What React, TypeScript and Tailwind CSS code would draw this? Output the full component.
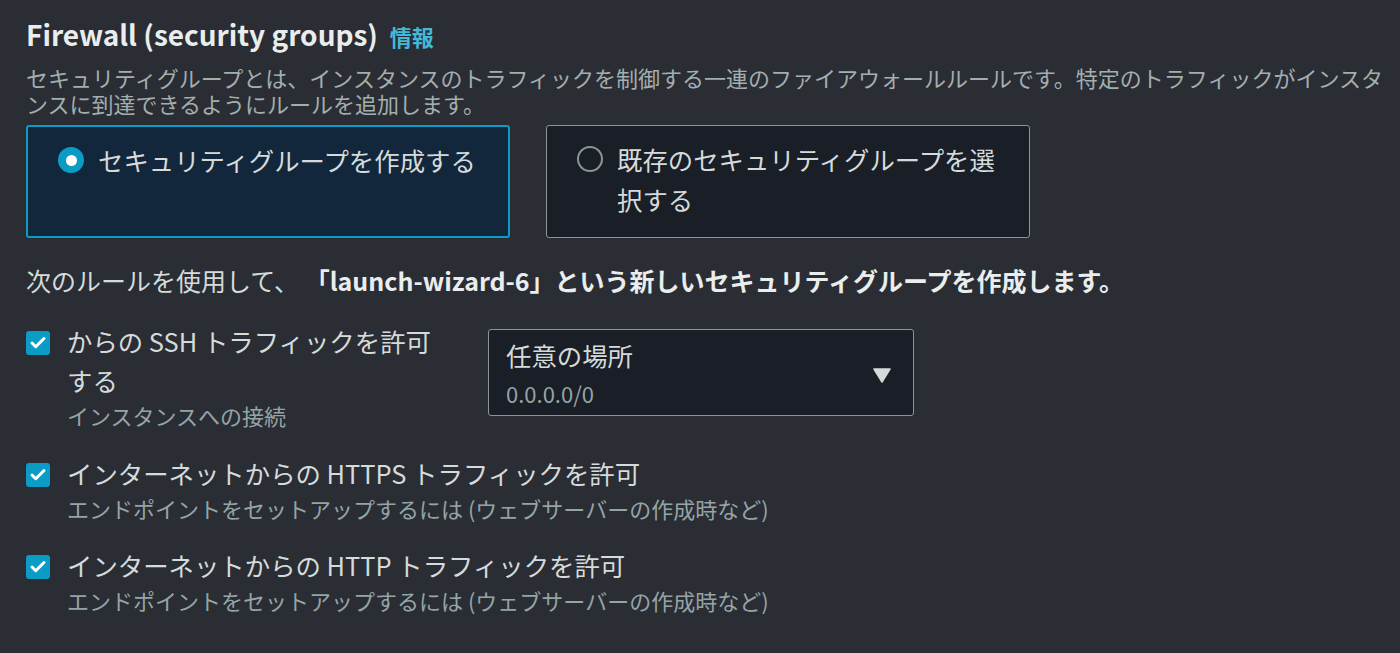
import { Check } from "lucide-react";

const font = { fontFamily: '"Noto Sans CJK JP", "Noto Sans", sans-serif' };

const rules = [
  {
    id: "ssh",
    label: "からの SSH トラフィックを許可する",
    hint: "インスタンスへの接続",
    withSource: true,
  },
  {
    id: "https",
    label: "インターネットからの HTTPS トラフィックを許可",
    hint: "エンドポイントをセットアップするには (ウェブサーバーの作成時など)",
  },
  {
    id: "http",
    label: "インターネットからの HTTP トラフィックを許可",
    hint: "エンドポイントをセットアップするには (ウェブサーバーの作成時など)",
  },
];

function Tile({ selected, children }: { selected?: boolean; children: React.ReactNode }) {
  return (
    <div
      className={`flex h-[113px] w-[484px] items-start gap-[14px] rounded-[3px] pl-[30px] pr-[28px] pt-[13px] ${
        selected
          ? "border-2 border-[#0a9cc4] bg-[#13273c]"
          : "border border-[#8a9696] bg-[#1a1e26]"
      }`}
    >
      <div className="flex h-[40px] shrink-0 items-center">
        {selected ? (
          <span className="flex h-[26px] w-[26px] items-center justify-center rounded-full bg-[#0a9cc4]">
            <span className="h-[11px] w-[11px] rounded-full bg-white" />
          </span>
        ) : (
          <span className="h-[26px] w-[26px] rounded-full border-2 border-[#8a9696]" />
        )}
      </div>
      <span className="text-[25.4px] leading-[40px] text-[#d5dbdb]">{children}</span>
    </div>
  );
}

function Rule({ rule }: { rule: (typeof rules)[number] }) {
  return (
    <div className="flex items-start">
      <span className="mt-[9px] flex h-[24px] w-[24px] shrink-0 items-center justify-center rounded-[3px] bg-[#0a9cc4]">
        <Check className="h-[18px] w-[18px] text-white" strokeWidth={4} />
      </span>
      <div className={`ml-[17px] ${rule.withSource ? "w-[380px]" : ""}`}>
        <div className="text-[25.4px] leading-[39px] text-[#d5dbdb]">{rule.label}</div>
        <div className="text-[22px] leading-[31px] text-[#95a4a5]">{rule.hint}</div>
      </div>
      {rule.withSource && (
        <div className="ml-[41px] mt-[7px] flex h-[87px] w-[426px] items-center justify-between rounded-[3px] border border-[#8a9696] bg-[#1a1e26] pl-[17px] pr-[22px]">
          <div className="mt-[4px]">
            <div className="text-[25.4px] leading-[36px] text-[#d5dbdb]">任意の場所</div>
            <div className="text-[22px] leading-[40px] text-[#95a4a5]">0.0.0.0/0</div>
          </div>
          <svg width="18" height="15" viewBox="0 0 18 15" className="mt-[6px]">
            <path d="M1 1 H17 L9 14 Z" fill="#d5dbdb" stroke="#d5dbdb" strokeWidth="1.5" strokeLinejoin="round" />
          </svg>
        </div>
      )}
    </div>
  );
}

export default function App() {
  return (
    <div className="min-h-[653px] w-full bg-[#2a2d34] pl-[26px] pr-[16px] pt-[16px]" style={font}>
      <h2 className="flex items-baseline gap-[12px] text-[28px] font-bold leading-[36px] text-[#eaeded]">
        Firewall (security groups)
        <a className="text-[22px] font-bold text-[#44b9d6]">情報</a>
      </h2>
      <p className="mt-[10px] text-[22px] leading-[26px] text-[#a3aeae]">
        セキュリティグループとは、インスタンスのトラフィックを制御する一連のファイアウォールルールです。特定のトラフィックがインスタンスに到達できるようにルールを追加します。
      </p>

      <div className="mt-[9px] flex gap-[36px]">
        <Tile selected>セキュリティグループを作成する</Tile>
        <Tile>既存のセキュリティグループを選択する</Tile>
      </div>

      <p className="mt-[24px] text-[25px] leading-[36px] text-[#d5dbdb]">
        次のルールを使用して、{" "}
        <strong className="font-bold text-[#eaeded]">「launch-wizard-6」という新しいセキュリティグループを作成します。</strong>
      </p>

      <div className="mt-[24px] flex flex-col gap-[22.5px]">
        {rules.map((r) => (
          <Rule key={r.id} rule={r} />
        ))}
      </div>
    </div>
  );
}
